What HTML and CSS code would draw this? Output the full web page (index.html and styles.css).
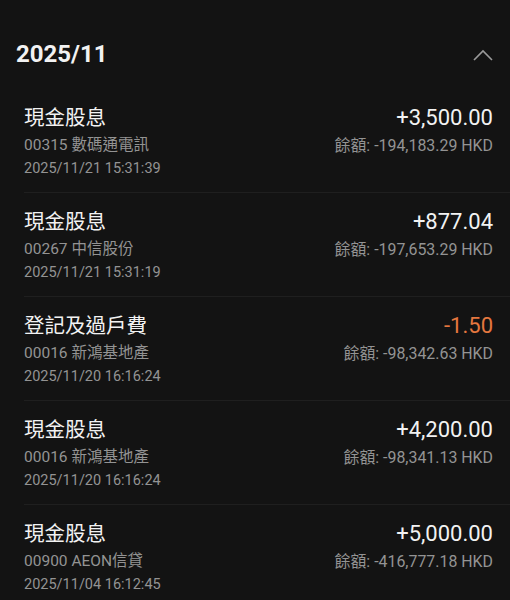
FILE: index.html
```html
<!DOCTYPE html>
<html lang="zh-Hant">
<head>
  <meta charset="UTF-8" />
  <meta name="viewport" content="width=device-width, initial-scale=1.0"/>
  <title>交易記錄</title>
  <link rel="stylesheet" href="styles.css">
</head>
<body>
  <div class="mes">
    <h2>2025/11</h2>
    <svg class="flecha" width="20" height="12" viewBox="0 0 20 12">
      <polyline points="1,11 10,2 19,11" fill="none" stroke="#9a9a9a" stroke-width="1.6"/>
    </svg>
  </div>

  <div class="lista">
    <div class="fila">
      <div class="izq">
        <div class="tipo">現金股息</div>
        <div class="sub">00315 數碼通電訊</div>
        <div class="sub fecha">2025/11/21 15:31:39</div>
      </div>
      <div class="der">
        <div class="monto">+3,500.00</div>
        <div class="sub">餘額: -194,183.29 HKD</div>
      </div>
    </div>

    <div class="fila">
      <div class="izq">
        <div class="tipo">現金股息</div>
        <div class="sub">00267 中信股份</div>
        <div class="sub fecha">2025/11/21 15:31:19</div>
      </div>
      <div class="der">
        <div class="monto">+877.04</div>
        <div class="sub">餘額: -197,653.29 HKD</div>
      </div>
    </div>

    <div class="fila">
      <div class="izq">
        <div class="tipo">登記及過戶費</div>
        <div class="sub">00016 新鴻基地產</div>
        <div class="sub fecha">2025/11/20 16:16:24</div>
      </div>
      <div class="der">
        <div class="monto negativo">-1.50</div>
        <div class="sub">餘額: -98,342.63 HKD</div>
      </div>
    </div>

    <div class="fila">
      <div class="izq">
        <div class="tipo">現金股息</div>
        <div class="sub">00016 新鴻基地產</div>
        <div class="sub fecha">2025/11/20 16:16:24</div>
      </div>
      <div class="der">
        <div class="monto">+4,200.00</div>
        <div class="sub">餘額: -98,341.13 HKD</div>
      </div>
    </div>

    <div class="fila">
      <div class="izq">
        <div class="tipo">現金股息</div>
        <div class="sub">00900 AEON信貸</div>
        <div class="sub fecha">2025/11/04 16:12:45</div>
      </div>
      <div class="der">
        <div class="monto">+5,000.00</div>
        <div class="sub">餘額: -416,777.18 HKD</div>
      </div>
    </div>
  </div>
</body>
</html>
```

FILE: styles.css
```css
body {
  font-family: Roboto, "Noto Sans CJK TC", sans-serif;
  margin: 0;
  background: #131313;
  color: #f0f0f0;
  overflow: hidden;
}

.mes {
  display: flex;
  justify-content: space-between;
  align-items: center;
  padding: 38px 17px 19px 16px;
}

.mes h2 {
  margin: 0;
  font-size: 24px;
  line-height: 32px;
  font-weight: bold;
  color: #f2f2f2;
}

.flecha {
  margin-top: 2px;
}

.lista {
  padding-left: 24px;
}

.fila {
  display: flex;
  justify-content: space-between;
  padding: 17px 17px 12px 0;
  border-bottom: 1px solid #1f1f1f;
}

.tipo, .monto {
  font-size: 20.5px;
  line-height: 24px;
  margin-bottom: 4px;
  color: #f2f2f2;
}

.monto {
  font-size: 22px;
  text-align: right;
}

.negativo {
  color: #e5773f;
}

.sub {
  font-size: 15.5px;
  line-height: 23px;
  color: #939393;
}

.fecha {
  font-size: 14.5px;
}

.der .sub {
  font-size: 15.9px;
  text-align: right;
}
```
